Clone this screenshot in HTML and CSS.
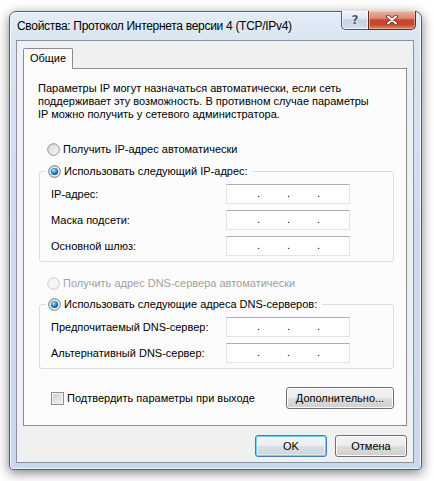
FILE: index.html
```html
<!DOCTYPE html>
<html lang="ru">
<head>
<meta charset="utf-8">
<title>Свойства: Протокол Интернета версии 4 (TCP/IPv4)</title>
<link rel="stylesheet" href="styles.css">
</head>
<body>
<svg class="defs" width="0" height="0" aria-hidden="true">
  <defs>
    <linearGradient id="rfill" x1="0" y1="0" x2="1" y2="1">
      <stop offset="0" stop-color="#d4d6d8"/>
      <stop offset="1" stop-color="#fbfbfb"/>
    </linearGradient>
    <radialGradient id="rdot" cx="0.4" cy="0.35" r="0.7">
      <stop offset="0" stop-color="#b6ecff"/>
      <stop offset="0.45" stop-color="#3b9ad6"/>
      <stop offset="1" stop-color="#0c3e6c"/>
    </radialGradient>
  </defs>
</svg>
<div class="window">
  <div class="titlebar">
    <span class="title">Свойства: Протокол Интернета версии 4 (TCP/IPv4)</span>
    <div class="caption-btns">
      <div class="cbtn help">?</div>
      <div class="cbtn close">
        <svg width="12" height="10" viewBox="0 0 12 10"><path d="M2 1.5 L10 8.5 M10 1.5 L2 8.5" stroke="#5a2218" stroke-width="3.6" stroke-linecap="round"/><path d="M2 1.5 L10 8.5 M10 1.5 L2 8.5" stroke="#ffffff" stroke-width="2" stroke-linecap="round"/></svg>
      </div>
    </div>
  </div>
  <div class="client">
    <div class="tabs"><div class="tab">Общие</div></div>
    <div class="panel">
      <p class="intro">Параметры IP могут назначаться автоматически, если сеть<br>поддерживает эту возможность. В противном случае параметры<br>IP можно получить у сетевого администратора.</p>

      <div class="option first-option">
        <svg class="radio" width="13" height="13" viewBox="0 0 13 13"><circle cx="6.5" cy="6.5" r="5.8" fill="url(#rfill)" stroke="#8d9297" stroke-width="1"/></svg>
        <span>Получить IP-адрес автоматически</span>
      </div>

      <fieldset class="group group-ip">
        <legend class="option">
          <svg class="radio" width="13" height="13" viewBox="0 0 13 13"><circle cx="6.5" cy="6.5" r="5.8" fill="url(#rfill)" stroke="#6f7680" stroke-width="1"/><circle cx="6.5" cy="6.5" r="3.6" fill="url(#rdot)"/></svg>
          <span>Использовать следующий IP-адрес:</span>
        </legend>
        <div class="row"><span class="lbl">IP-адрес:</span><span class="ip"><span>.</span><span>.</span><span>.</span></span></div>
        <div class="row"><span class="lbl">Маска подсети:</span><span class="ip"><span>.</span><span>.</span><span>.</span></span></div>
        <div class="row"><span class="lbl">Основной шлюз:</span><span class="ip"><span>.</span><span>.</span><span>.</span></span></div>
      </fieldset>

      <div class="option disabled dns-auto">
        <svg class="radio" width="13" height="13" viewBox="0 0 13 13"><circle cx="6.5" cy="6.5" r="5.8" fill="#f4f4f4" stroke="#c9cbce" stroke-width="1"/></svg>
        <span>Получить адрес DNS-сервера автоматически</span>
      </div>

      <fieldset class="group group-dns">
        <legend class="option">
          <svg class="radio" width="13" height="13" viewBox="0 0 13 13"><circle cx="6.5" cy="6.5" r="5.8" fill="url(#rfill)" stroke="#6f7680" stroke-width="1"/><circle cx="6.5" cy="6.5" r="3.6" fill="url(#rdot)"/></svg>
          <span>Использовать следующие адреса DNS-серверов:</span>
        </legend>
        <div class="row"><span class="lbl">Предпочитаемый DNS-сервер:</span><span class="ip"><span>.</span><span>.</span><span>.</span></span></div>
        <div class="row"><span class="lbl">Альтернативный DNS-сервер:</span><span class="ip"><span>.</span><span>.</span><span>.</span></span></div>
      </fieldset>

      <div class="bottom-row">
        <div class="check-opt"><span class="checkbox"></span><span>Подтвердить параметры при выходе</span></div>
        <div class="btn btn-adv">Дополнительно...</div>
      </div>
    </div>
    <div class="dialog-buttons">
      <div class="btn btn-default">OK</div>
      <div class="btn">Отмена</div>
    </div>
  </div>
</div>
</body>
</html>
```

FILE: styles.css
```css
* { box-sizing: border-box; }

html, body {
  margin: 0;
  padding: 0;
  background: #ffffff;
}

body {
  width: 434px;
  height: 481px;
  padding: 11px 0 0 9px;
  font-family: "Liberation Sans", Arial, sans-serif;
  font-size: 11px;
  color: #000;
  overflow: hidden;
}

.defs { position: absolute; width: 0; height: 0; }

.window {
  width: 413px;
  height: 459px;
  border: 1px solid #525d6b;
  border-radius: 7px 7px 4px 4px;
  background: linear-gradient(180deg, #e4edf7 0px, #d9e5f2 30px, #cfdcec 200px, #c9d8ea 100%);
  box-shadow: 0 3px 12px rgba(0, 0, 0, 0.5), inset 0 0 0 1px rgba(255, 255, 255, 0.75);
  display: flex;
  flex-direction: column;
}

.titlebar {
  height: 28px;
  display: flex;
  justify-content: space-between;
  align-items: flex-start;
  padding: 0 5px 0 7px;
}

.title {
  line-height: 28px;
  font-size: 12px;
  letter-spacing: -0.3px;
  white-space: nowrap;
  color: #000;
}

.caption-btns {
  display: flex;
  margin-top: -1px;
}

.cbtn {
  height: 19px;
  border: 1px solid #4e5b6b;
  border-top: none;
  display: flex;
  align-items: center;
  justify-content: center;
}

.help {
  width: 27px;
  border-right: none;
  border-radius: 0 0 0 5px;
  background: linear-gradient(180deg, #f1f5fa 0%, #dde6f0 45%, #c3d2e3 50%, #cad8e8 80%, #dbe5f0 100%);
  box-shadow: inset 0 0 0 1px rgba(255, 255, 255, 0.6);
  font-family: "DejaVu Sans", sans-serif;
  font-weight: bold;
  font-size: 12px;
  color: #4a5767;
  text-shadow: 0 0 2px #ffffff, 0 0 1px #ffffff;
}

.close {
  width: 48px;
  border-color: #5a2b22;
  border-radius: 0 0 5px 0;
  background: linear-gradient(180deg, #eab1a3 0%, #dc8a73 40%, #c6452b 50%, #c9482d 75%, #de8464 100%);
  box-shadow: inset 0 0 0 1px rgba(255, 220, 210, 0.5);
}

.client {
  margin: 0 7px 6px 6px;
  flex: 1;
  border: 1px solid #8593a4;
  background: #f0f0f0;
  padding: 7px 6px 0 6px;
  display: flex;
  flex-direction: column;
}

.tabs {
  display: flex;
  height: 20px;
  position: relative;
  z-index: 1;
}

.tab {
  width: 50px;
  height: 21px;
  border: 1px solid #898c95;
  border-bottom: none;
  border-radius: 2px 2px 0 0;
  background: #fcfcfc;
  text-align: center;
  line-height: 18px;
}

.panel {
  height: 358px;
  border: 1px solid #898c95;
  background: #fcfcfc;
  padding: 0 12px 0 0;
  display: flex;
  flex-direction: column;
}

.intro {
  margin: 13px 0 0 14px;
  line-height: 13px;
  white-space: nowrap;
}

.option {
  display: flex;
  align-items: center;
  height: 14px;
  white-space: nowrap;
}

.option .radio {
  flex: none;
  margin-right: 3px;
}

.first-option {
  margin: 21px 0 0 23px;
}

.group {
  margin: 8px 0 0 15px;
  border: 1px solid #d5dfe5;
  border-radius: 3px;
  padding: 6px 0 5px 0;
  min-width: 0;
}

.group legend {
  margin-left: 6px;
  padding: 0 5px 0 2px;
  line-height: 14px;
}

.row {
  display: flex;
  align-items: center;
  height: 20px;
  margin: 0 0 6px 11px;
}

.row:last-child { margin-bottom: 0; }

.lbl {
  width: 175px;
  white-space: nowrap;
}

.ip {
  width: 124px;
  height: 20px;
  border: 1px solid #e2e3ea;
  border-top-color: #abadb3;
  background: #fff;
  display: flex;
  padding-left: 30px;
  line-height: 17px;
}

.ip span {
  width: 30px;
  flex: none;
}

.dns-auto {
  margin: 14px 0 0 23px;
}

.disabled { color: #a0a0a0; }

.group-dns { margin-top: 7px; }

.bottom-row {
  margin: 18px 0 0 27px;
  display: flex;
  justify-content: space-between;
  align-items: center;
}

.check-opt {
  display: flex;
  align-items: center;
  white-space: nowrap;
}

.checkbox {
  width: 13px;
  height: 13px;
  margin-right: 3px;
  border: 1px solid #8e8f8f;
  background: linear-gradient(135deg, #c8c9ca 0%, #e6e6e6 60%, #f4f4f4 100%);
  box-shadow: inset 0 0 0 1px #f2f2f2;
}

.btn {
  height: 22px;
  border: 1px solid #707070;
  border-radius: 3px;
  background: linear-gradient(180deg, #f2f2f2 0%, #ebebeb 50%, #dddddd 51%, #cfcfcf 100%);
  box-shadow: inset 0 0 0 1px #fbfbfb;
  display: flex;
  align-items: center;
  justify-content: center;
  white-space: nowrap;
}

.btn-adv {
  width: 108px;
}

.dialog-buttons {
  display: flex;
  justify-content: flex-end;
  gap: 8px;
  margin-top: 9px;
}

.dialog-buttons .btn {
  width: 72px;
}

.btn-default {
  border-color: #3c7fb1;
  box-shadow: inset 0 0 0 1px #6fd3f6, inset 0 0 0 2px rgba(255, 255, 255, 0.4);
  background: linear-gradient(180deg, #f2f5f8 0%, #eaeef2 50%, #d9dfe5 51%, #cdd4da 100%);
}
```
